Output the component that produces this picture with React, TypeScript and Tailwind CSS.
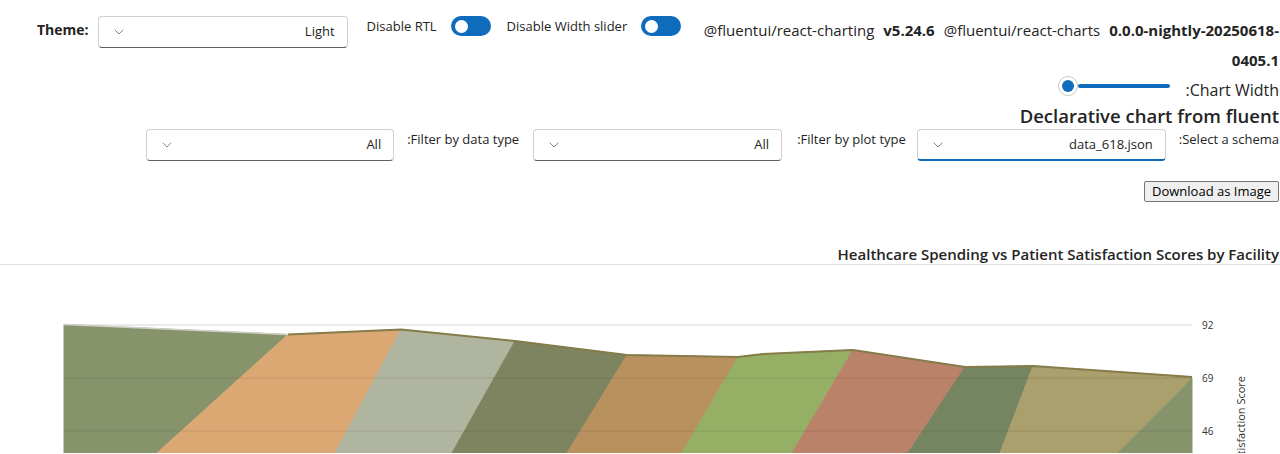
import React from "react";
import { ChevronDown } from "lucide-react";

const font = { fontFamily: '"Open Sans", "Noto Sans", sans-serif' };

const Dropdown: React.FC<{ value: string; width: string; focused?: boolean }> = ({
  value,
  width,
  focused,
}) => (
  <div
    className={`${width} h-[32px] flex items-center justify-between rounded-[4px] border border-[#d1d1d1] bg-white ${
      focused ? "border-b-2 border-b-[#0f6cbd]" : "border-b-[#616161]"
    }`}
  >
    <ChevronDown className="ml-[12px] w-[16px] h-[16px] text-[#707070]" strokeWidth={1.25} />
    <span className="mr-[12px] text-[13px] text-[#242424]">{value}</span>
  </div>
);

const Toggle: React.FC = () => (
  <div className="w-[40px] h-[20px] rounded-full bg-[#0f6cbd] flex items-center">
    <div className="ml-[4px] w-[13px] h-[13px] rounded-full bg-white" />
  </div>
);

const fills = [
  { c: "#87946b", p: "64,325.5 288,335.5 157,454 64,454" },
  { c: "#dba874", p: "288,335.5 401,330.5 335,454 157,454" },
  { c: "#b0b5a0", p: "401,330.5 515,342 452,454 335,454" },
  { c: "#7f8460", p: "515,342 627,356 567,454 452,454" },
  { c: "#b8915f", p: "627,356 738,358 682,454 567,454" },
  { c: "#95b064", p: "738,358 763,355 853,351 792,454 682,454" },
  { c: "#bb826a", p: "853,351 965,368 908,454 792,454" },
  { c: "#758561", p: "965,368 1033,367 1000,454 908,454" },
  { c: "#ab9f6d", p: "1033,367 1192,378 1118,454 1000,454" },
  { c: "#87946b", p: "1192,379 1192,454 1118,454" },
];

const Chart: React.FC = () => (
  <svg width={1280} height={188} viewBox="0 266 1280 188" className="block">
    <line x1={64} x2={1192} y1={326} y2={326} stroke="#d6d6d6" strokeWidth={1} />
    {fills.map((f, i) => (
      <polygon key={i} points={f.p} fill={f.c} stroke={f.c} strokeWidth={1} />
    ))}
    <line x1={64} x2={1192} y1={379} y2={379} stroke="rgba(0,0,0,0.07)" strokeWidth={1.5} />
    <line x1={64} x2={1192} y1={432} y2={432} stroke="rgba(0,0,0,0.07)" strokeWidth={1.5} />
    <polyline points="64,325.5 288,335.5" fill="none" stroke="#cfd0c8" strokeWidth={1.5} />
    <polyline
      points="288,335.5 401,330.5 515,342 627,356 738,358 763,355 853,351 965,368 1033,367 1192,378"
      fill="none"
      stroke="#867b4a"
      strokeWidth={2}
    />
    <g fontSize={10} fill="#323130" style={font}>
      <text x={1202} y={329.5}>92</text>
      <text x={1202} y={382.5}>69</text>
      <text x={1202} y={435.5}>46</text>
    </g>
    <text
      transform="translate(1245,377) rotate(-90)"
      textAnchor="end"
      fontSize={11}
      fill="#323130"
      style={font}
    >
      Patient Satisfaction Score
    </text>
  </svg>
);

export default function App() {
  return (
    <div className="w-[1280px] bg-white text-[#242424]" style={font}>
      <div className="flex items-start pl-[37px] pt-[15px]">
        <span className="text-[14px] font-bold leading-[30px]">Theme:</span>
        <div className="ml-[9px] mt-[1px]">
          <Dropdown value="Light" width="w-[250px]" />
        </div>
        <span className="ml-[19px] text-[13px] leading-[22px]">Disable RTL</span>
        <div className="ml-[14px] mt-[1px]">
          <Toggle />
        </div>
        <span className="ml-[16px] text-[13px] leading-[22px]">Disable Width slider</span>
        <div className="ml-[14px] mt-[1px]">
          <Toggle />
        </div>
        <div className="flex-1 flex justify-end gap-[9px] text-[15px] leading-[30px] pr-[1px]">
          <span>@fluentui/react-charting</span>
          <span className="font-bold">v5.24.6</span>
          <span>@fluentui/react-charts</span>
          <span className="font-bold text-right">
            0.0.0-nightly-20250618-
            <br />
            0405.1
          </span>
        </div>
      </div>

      <div className="flex justify-end items-center h-[24px] mt-[3px] pr-[1px]">
        <div className="flex items-center mb-[8px] mr-[16px]">
          <div className="w-[20px] h-[20px] rounded-full border border-[#c8c8c8] bg-white flex items-center justify-center">
            <div className="w-[12px] h-[12px] rounded-full bg-[#0f6cbd]" />
          </div>
          <div className="w-[92px] h-[4px] rounded-full bg-[#0f6cbd]" />
        </div>
        <span className="text-[16px]">:Chart Width</span>
      </div>

      <div className="text-right pr-[1px] text-[18.5px] font-semibold leading-[27px]">
        Declarative chart from fluent
      </div>

      <div className="flex justify-end items-start pr-[1px] text-[13px]">
        <Dropdown value="All" width="w-[248px]" />
        <span className="ml-[13px] leading-[20px]">:Filter by data type</span>
        <div className="ml-[14px]">
          <Dropdown value="All" width="w-[249px]" />
        </div>
        <span className="ml-[15px] leading-[20px]">:Filter by plot type</span>
        <div className="ml-[11px]">
          <Dropdown value="data_618.json" width="w-[249px]" focused />
        </div>
        <span className="ml-[13px] leading-[20px]">:Select a schema</span>
      </div>

      <div className="flex justify-end mt-[20px] pr-[1px]">
        <button className="h-[21px] px-[7px] text-[13px] leading-[19px] text-black bg-[#efefef] border border-[#767676] rounded-[2px]">
          Download as Image
        </button>
      </div>

      <div className="mt-[42px] border-b border-[#e1e1e1] text-right pr-[1px]">
        <span className="text-[15px] font-semibold leading-[20px] block">
          Healthcare Spending vs Patient Satisfaction Scores by Facility
        </span>
      </div>

      <Chart />
    </div>
  );
}
